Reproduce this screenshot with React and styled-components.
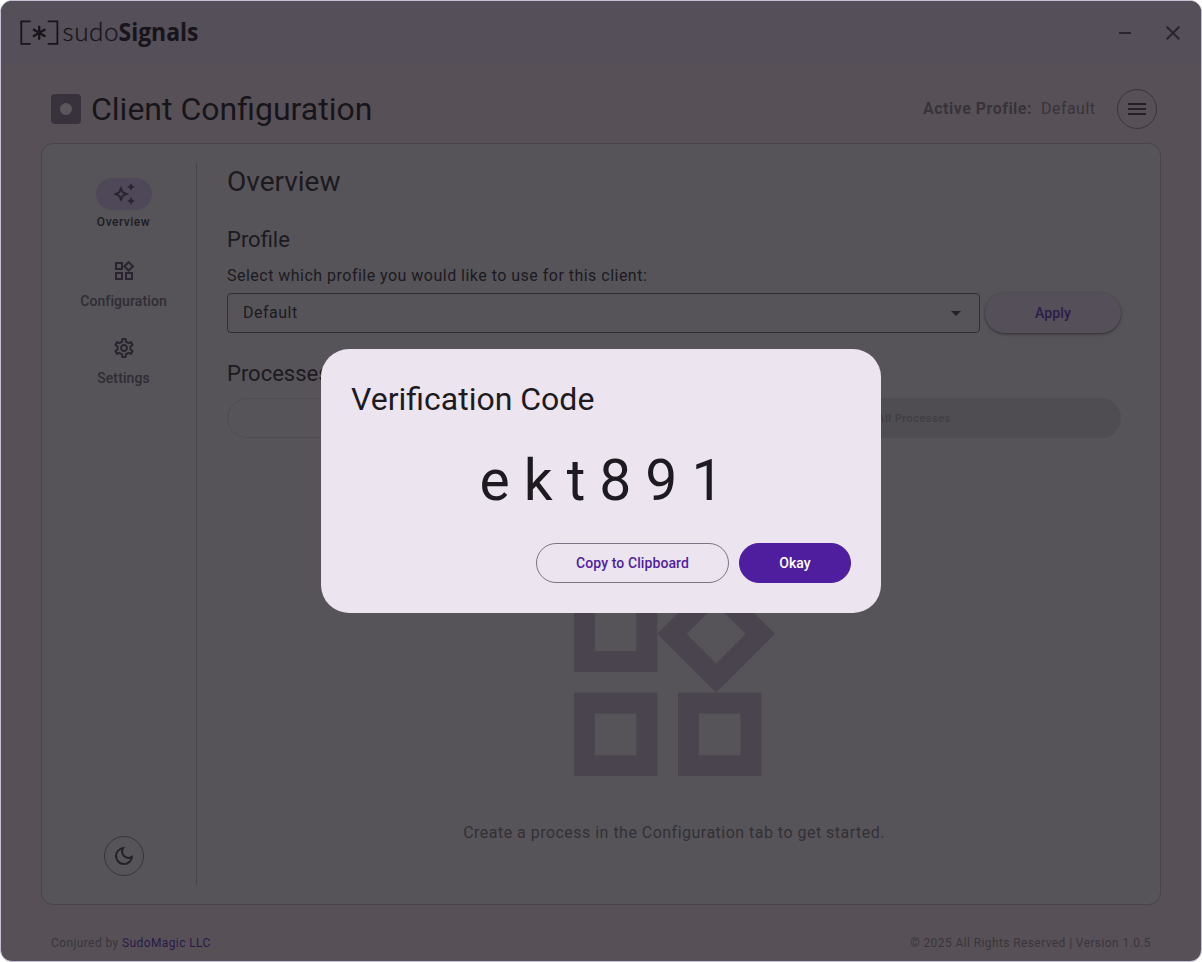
import React from 'react';
import styled, { createGlobalStyle } from 'styled-components';
import {
  MdOutlineAutoAwesome,
  MdOutlineSettings,
  MdMenu,
  MdClose,
  MdArrowDropDown,
} from 'react-icons/md';

const Global = createGlobalStyle`
  * { box-sizing: border-box; }
  html, body { margin: 0; background: #fff; }
  body { font-family: Roboto, "Liberation Sans", sans-serif; overflow: hidden; }
  button { font-family: inherit; padding: 0; margin: 0; }
  h1, h2, h3, p { margin: 0; font-weight: 400; }
`;

const Window = styled.div`
  position: relative;
  width: 1202px;
  height: 962px;
  display: flex;
  flex-direction: column;
  border: 1px solid #c5c0d3;
  border-radius: 12px;
  overflow: hidden;
  background: #575157;
`;

const TitleBar = styled.header`
  height: 64px;
  flex: none;
  display: flex;
  align-items: center;
  justify-content: space-between;
  padding: 0 16px 0 19px;
  background: #544f59;
`;

const LogoSvg = styled.svg`
  display: block;
`;

const WindowControls = styled.div`
  display: flex;
  gap: 24px;
  color: #29242e;
`;

const ControlButton = styled.button`
  width: 24px;
  height: 24px;
  border: 0;
  background: none;
  color: inherit;
  svg { display: block; }
`;

const PageHeader = styled.div`
  display: flex;
  align-items: center;
  height: 40px;
  margin: 24px 44px 0 50px;
`;

const AppMark = styled.div`
  width: 30px;
  height: 30px;
  border-radius: 4px;
  background: #38323d;
  display: grid;
  place-items: center;
  &::after {
    content: '';
    width: 12px;
    height: 12px;
    border-radius: 50%;
    background: #5a565c;
  }
`;

const PageTitle = styled.h1`
  margin-left: 10px;
  flex: 1;
  font-size: 32px;
  line-height: 40px;
  color: #17151a;
`;

const ActiveProfile = styled.div`
  display: flex;
  gap: 9px;
  margin-right: 21.5px;
  padding-bottom: 2px;
  font-size: 16px;
  letter-spacing: 0.48px;
  color: #37333a;
  b { font-weight: 700; }
`;

const RoundButton = styled.button`
  width: 40px;
  height: 40px;
  border: 1px solid #38343c;
  border-radius: 50%;
  background: none;
  color: #232027;
  display: grid;
  place-items: center;
`;

const Card = styled.main`
  flex: 1;
  display: flex;
  margin: 14px 40px 0;
  padding: 19px 39px 19px 0;
  border: 1px solid #48444c;
  border-radius: 12px;
  background: #565459;
`;

const Sidebar = styled.nav`
  width: 155px;
  border-right: 1px solid #47434b;
  display: flex;
  flex-direction: column;
  align-items: center;
  padding: 15px 0 9px 9px;
`;

const NavItem = styled.a`
  display: flex;
  flex-direction: column;
  align-items: center;
  height: ${(p) => p.$height}px;
  color: ${(p) => (p.$active ? '#1f1c23' : '#302c35')};
`;

const NavIcon = styled.span`
  width: 56px;
  height: 32px;
  border-radius: 16px;
  display: grid;
  place-items: center;
  color: #29242f;
  background: ${(p) => (p.$active ? '#4f4859' : 'transparent')};
`;

const NavLabel = styled.span`
  margin-top: 4px;
  font-size: ${(p) => (p.$active ? 12 : 14)}px;
  font-weight: 500;
  line-height: ${(p) => (p.$active ? 16 : 20)}px;
  letter-spacing: ${(p) => (p.$active ? 0.5 : 0.1)}px;
`;

const SidebarFoot = styled.div`
  margin-top: auto;
`;

const Content = styled.section`
  flex: 1;
  display: flex;
  flex-direction: column;
  margin-left: 30px;
  padding-top: 1px;
  color: #1c1a1f;
`;

const SectionTitle = styled.h2`
  font-size: 28px;
  line-height: 36px;
`;

const SubTitle = styled.h3`
  margin-top: ${(p) => p.$top}px;
  font-size: 22px;
  line-height: 28px;
`;

const Hint = styled.p`
  margin-top: 10px;
  font-size: 16px;
  line-height: 24px;
  letter-spacing: 0.48px;
`;

const ProfileRow = styled.div`
  display: flex;
  gap: 5px;
  margin-top: 5px;
`;

const Select = styled.div`
  width: 753px;
  height: 40px;
  display: flex;
  align-items: center;
  justify-content: space-between;
  padding: 0 11px 0 15px;
  border: 1px solid #302d34;
  border-radius: 4px;
  font-size: 16px;
  letter-spacing: 0.5px;
  span { padding-bottom: 2px; }
  svg { color: #232027; }
`;

const ApplyButton = styled.button`
  flex: 1;
  height: 40px;
  border: 0;
  border-radius: 20px;
  background: #554f59;
  box-shadow: 0 1px 2px rgba(0, 0, 0, 0.3), 0 1px 3px 1px rgba(0, 0, 0, 0.12);
  color: #2c1c48;
  font-size: 14px;
  font-weight: 500;
  letter-spacing: 0.1px;
`;

const ProcessRow = styled.div`
  display: flex;
  gap: 10px;
  margin-top: 10px;
`;

const ProcessButton = styled.button`
  flex: 1;
  height: 40px;
  border: 1px solid ${(p) => (p.$filled ? 'transparent' : '#4f4d52')};
  border-radius: 20px;
  background: ${(p) => (p.$filled ? '#4f4d51' : 'transparent')};
  background-clip: border-box;
  color: #403e43;
  font-size: 11px;
  font-weight: 500;
  letter-spacing: 0.5px;
`;

const EmptyState = styled.div`
  display: flex;
  flex-direction: column;
  align-items: center;
  margin-top: 137px;
  color: #4a444e;
  p {
    margin-top: 45px;
    font-size: 16px;
    line-height: 24px;
    letter-spacing: 0.48px;
    color: #333036;
  }
`;

const Footer = styled.footer`
  height: 56px;
  flex: none;
  display: flex;
  justify-content: space-between;
  padding: 30px 50px 0 50px;
  font-size: 12px;
  line-height: 16px;
  letter-spacing: 0.4px;
  color: #393539;
  a { color: #28194a; }
`;

const Overlay = styled.div`
  position: absolute;
  inset: 0;
  display: grid;
  place-items: center;
`;

const Dialog = styled.div`
  width: 560px;
  height: 264px;
  display: flex;
  flex-direction: column;
  padding: 30px;
  border-radius: 28px;
  background: #ece5f0;
  color: #1d1a21;
`;

const DialogTitle = styled.h2`
  font-size: 32px;
  line-height: 40px;
`;

const Code = styled.p`
  margin-top: 30px;
  padding-left: 15px;
  text-align: center;
  font-size: 57px;
  line-height: 64px;
  letter-spacing: 14px;
`;

const DialogActions = styled.div`
  display: flex;
  justify-content: flex-end;
  gap: 10px;
  margin-top: auto;
`;

const DialogButton = styled.button`
  width: ${(p) => p.$width}px;
  height: 40px;
  border: 1px solid ${(p) => (p.$primary ? '#4f1e9f' : '#7a7485')};
  border-radius: 20px;
  background: ${(p) => (p.$primary ? '#4f1e9f' : 'transparent')};
  color: ${(p) => (p.$primary ? '#fff' : '#4f1e9f')};
  font-size: 14px;
  font-weight: 500;
  letter-spacing: 0.1px;
`;

const WIDGETS =
  'M16.66 4.52l2.83 2.83-2.83 2.83-2.83-2.83 2.83-2.83M9 5v4H5V5h4m10 10v4h-4v-4h4M9 15v4H5v-4h4m7.66-13.31L11 7.34 16.66 13l5.66-5.66-5.66-5.65zM11 3H3v8h8V3zm10 10h-8v8h8v-8zm-10 0H3v8h8v-8z';

function Logo() {
  return (
    <LogoSvg width="182" height="34" viewBox="0 0 182 34" fill="#17141a">
      <path
        d="M10.6 5.3H1.3v22.5h9.300M27.700 5.300h9.700v22.500h-9.700"
        fill="none"
        stroke="#17141a"
        strokeWidth="1.8"
      />
      <path
        d="M19.2 9.800v14M13 13.200l12.400 7.200M25.400 13.200l-12.400 7.200"
        fill="none"
        stroke="#17141a"
        strokeWidth="2.3"
      />
      <text x="42.5" y="24.800" fontFamily="Lato, sans-serif" fontSize="26" fontWeight="300" stroke="#17141a" strokeWidth="0.3" textLength="56">
        sudo
      </text>
      <text x="98.5" y="24.800" fontFamily="'Open Sans', sans-serif" fontSize="25" fontWeight="700" textLength="80" lengthAdjust="spacingAndGlyphs">
        Signals
      </text>
    </LogoSvg>
  );
}

function WidgetsIcon({ size, viewBox = '0 0 24 24' }) {
  return (
    <svg width={size} height={size} viewBox={viewBox} fill="currentColor">
      <path d={WIDGETS} />
    </svg>
  );
}

function MoonIcon() {
  return (
    <svg width="24" height="24" viewBox="0 -960 960 960" fill="currentColor">
      <path d="M480-120q-150 0-255-105T120-480q0-150 105-255t255-105q14 0 27.500 1t26.500 3q-41 29-65.500 75.500T444-660q0 90 63 153t153 63q55 0 101-24.500t75-65.500q2 13 3 26.500t1 27.500q0 150-105 255T480-120Zm0-80q88 0 158-48.500T740-375q-20 5-40 8t-40 3q-123 0-209.500-86.500T364-660q0-20 3-40t8-40q-78 32-126.500 102T200-480q0 116 82 198t198 82Z" />
    </svg>
  );
}

export default function App() {
  return (
    <>
      <Global />
      <Window>
        <TitleBar>
          <Logo />
          <WindowControls>
            <ControlButton aria-label="Minimize">
              <svg width="24" height="24" viewBox="0 0 24 24">
                <path d="M6 11h12v2H6z" fill="currentColor" />
              </svg>
            </ControlButton>
            <ControlButton aria-label="Close">
              <MdClose size={24} />
            </ControlButton>
          </WindowControls>
        </TitleBar>
        <PageHeader>
          <AppMark />
          <PageTitle>Client Configuration</PageTitle>
          <ActiveProfile>
            <b>Active Profile:</b>
            <span>Default</span>
          </ActiveProfile>
          <RoundButton aria-label="Menu">
            <MdMenu size={24} />
          </RoundButton>
        </PageHeader>
        <Card>
          <Sidebar>
            <NavItem $active $height={77}>
              <NavIcon $active>
                <MdOutlineAutoAwesome size={24} />
              </NavIcon>
              <NavLabel $active>Overview</NavLabel>
            </NavItem>
            <NavItem $height={77}>
              <NavIcon>
                <WidgetsIcon size={24} />
              </NavIcon>
              <NavLabel>Configuration</NavLabel>
            </NavItem>
            <NavItem $height={60}>
              <NavIcon>
                <MdOutlineSettings size={24} />
              </NavIcon>
              <NavLabel>Settings</NavLabel>
            </NavItem>
            <SidebarFoot>
              <RoundButton aria-label="Toggle dark mode">
                <MoonIcon />
              </RoundButton>
            </SidebarFoot>
          </Sidebar>
          <Content>
            <SectionTitle>Overview</SectionTitle>
            <SubTitle $top={26}>Profile</SubTitle>
            <Hint>Select which profile you would like to use for this client:</Hint>
            <ProfileRow>
              <Select>
                <span>Default</span>
                <MdArrowDropDown size={24} />
              </Select>
              <ApplyButton>Apply</ApplyButton>
            </ProfileRow>
            <SubTitle $top={27}>Processes</SubTitle>
            <ProcessRow>
              <ProcessButton disabled>Start All Processes</ProcessButton>
              <ProcessButton disabled $filled>Stop All Processes</ProcessButton>
            </ProcessRow>
            <EmptyState>
              <WidgetsIcon size={201} viewBox="3 1.69 19.32 19.31" />
              <p>Create a process in the Configuration tab to get started.</p>
            </EmptyState>
          </Content>
        </Card>
        <Footer>
          <span>
            Conjured by <a>SudoMagic LLC</a>
          </span>
          <span>© 2025 All Rights Reserved | Version 1.0.5</span>
        </Footer>
        <Overlay>
          <Dialog role="dialog">
            <DialogTitle>Verification Code</DialogTitle>
            <Code>ekt891</Code>
            <DialogActions>
              <DialogButton $width={193}>Copy to Clipboard</DialogButton>
              <DialogButton $width={112} $primary>Okay</DialogButton>
            </DialogActions>
          </Dialog>
        </Overlay>
      </Window>
    </>
  );
}
